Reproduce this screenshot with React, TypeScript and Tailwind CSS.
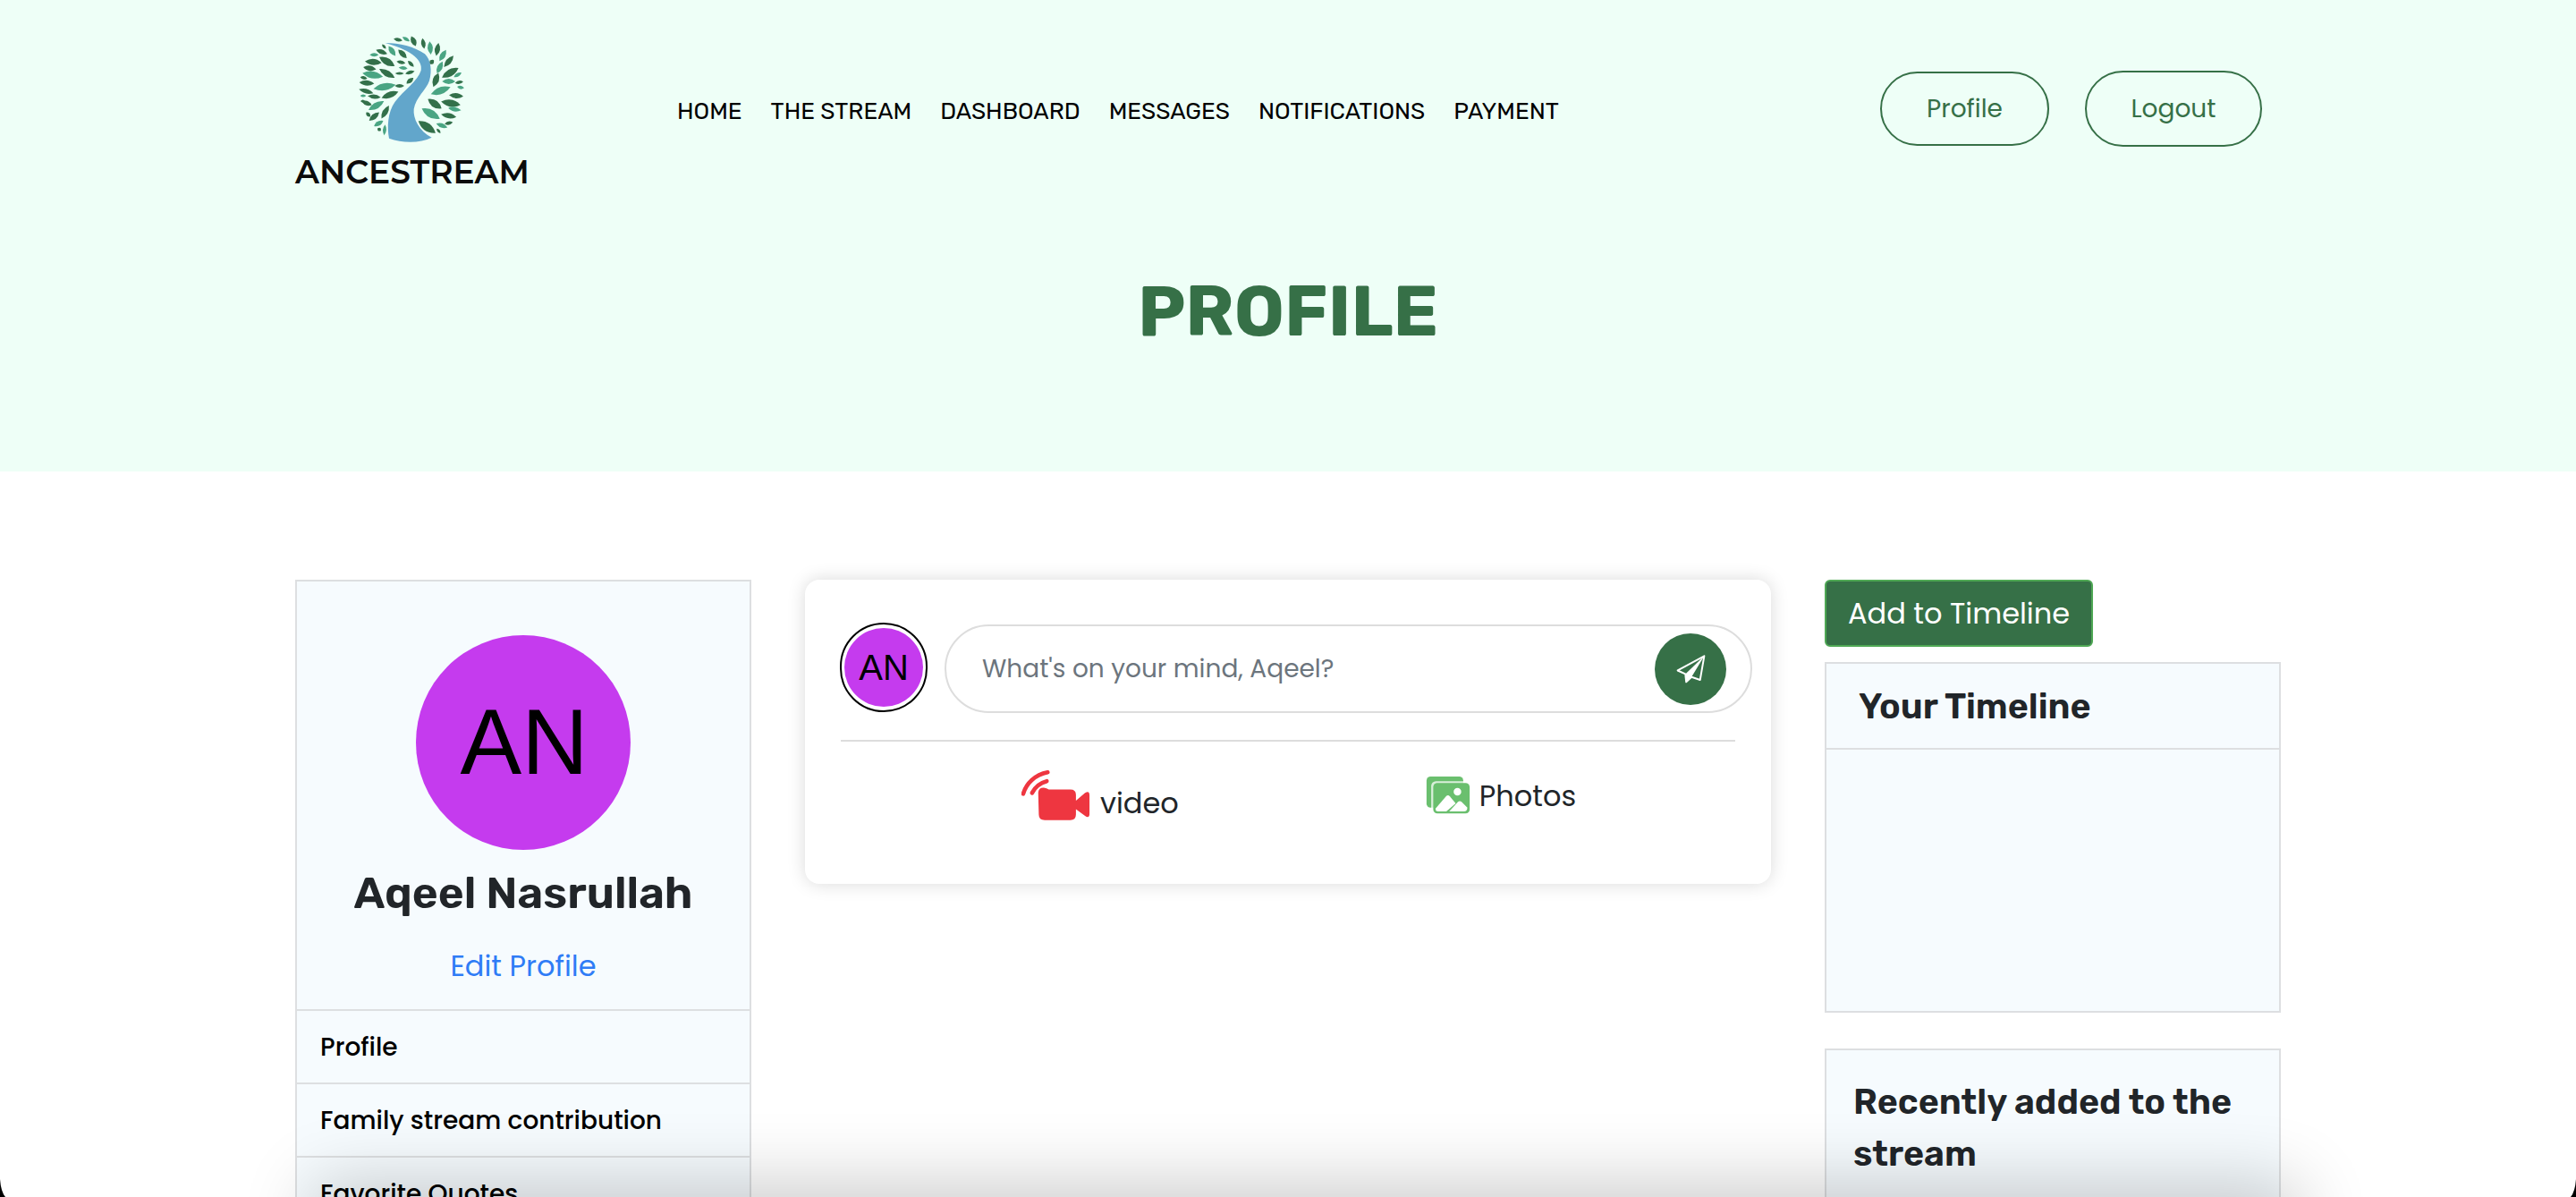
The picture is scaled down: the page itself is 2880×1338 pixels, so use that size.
const RUBIK = "font-['Rubik','Inter','Liberation_Sans',sans-serif]";
const POP = "font-['Poppins','Inter','Liberation_Sans',sans-serif]";
const D = "#33704a";
const L = "#4aa583";
const leaves: [number, number, number, number, number, string][] = [
  [195,37,15,4,10,D],[222,35,14,4,30,L],[247,42,18,6,65,D],[280,50,18,5,80,D],[303,65,22,6,85,L],[327,70,22,6,-80,D],
  [345,90,22,6,-60,L],[365,110,25,6,-50,D],[370,148,32,8,-30,D],[335,130,22,6,-65,L],[322,172,25,7,-70,D],[365,177,22,6,0,L],
  [400,180,14,4,-10,D],[395,155,15,4,-30,L],[338,208,35,8,-20,L],[390,225,24,6,5,D],[405,197,12,4,10,L],[372,250,33,8,10,D],
  [385,270,22,5,10,L],[365,292,26,6,10,D],[318,252,28,8,35,D],[305,285,35,9,30,L],[292,330,35,9,35,D],[342,325,20,5,20,L],
  [365,317,14,4,-10,D],[331,343,10,3,50,D],[308,112,8,6,45,D],[175,75,20,6,55,L],[140,78,20,5,20,D],[148,60,10,3,50,D],
  [115,88,15,4,0,L],[210,85,20,6,45,D],[158,110,30,8,30,D],[112,112,28,7,5,D],[100,133,22,6,10,D],[110,155,35,8,10,L],
  [158,150,30,7,30,D],[205,113,15,4,10,D],[238,118,14,4,45,D],[212,132,15,4,5,L],[200,150,15,3,0,D],[235,147,16,4,-15,D],
  [90,182,25,6,5,D],[150,195,38,8,-10,L],[200,192,16,4,0,D],[235,175,15,5,-40,D],[80,165,12,4,10,D],[88,210,25,5,15,D],
  [115,228,22,5,5,D],[168,222,30,7,-20,D],[78,225,10,3,0,L],[90,250,18,5,20,D],[122,258,30,7,-30,L],[77,243,8,3,0,D],
  [115,295,22,6,-40,D],[152,280,25,6,-60,D],[95,288,10,4,45,D],[130,318,18,5,-30,L],[132,338,7,4,40,D],[150,340,18,4,-85,L],
];

function Tree() {
  return (
    <svg width="160" height="140" viewBox="0 0 480 420">
      {leaves.map(([x, y, l, w, a, c], i) => (
        <path key={i} d={`M${-l} 0Q0 ${-w * 3} ${l} 0Q0 ${w * 3} ${-l} 0Z`} fill={c} transform={`translate(${x} ${y}) rotate(${a})`} />
      ))}
      <path d="M152 48C200 48 250 60 285 85C305 105 310 140 300 175C290 205 255 230 248 270C245 300 265 345 308 365C270 385 210 385 165 368C158 330 160 280 185 245C215 205 262 175 272 140C278 110 250 75 152 48Z" fill="#62a6cb" />
    </svg>
  );
}

function VideoIcon() {
  return (
    <svg width="78" height="56" viewBox="70 35 235 170" className="shrink-0">
      <path d="M75 115C85 80 115 50 158 42" fill="none" stroke="#ee3640" strokeWidth="14" strokeLinecap="round" />
      <path d="M105 112C115 92 132 78 155 72" fill="none" stroke="#ee3640" strokeWidth="14" strokeLinecap="round" />
      <path d="M126 110Q128 93 145 94Q155 96 162 100L235 100Q254 100 254 118L254 138L285 112Q300 102 300 120L300 182Q300 200 285 190L254 167L254 185Q254 204 235 204L148 204Q128 204 128 185Z" fill="#ee3640" />
    </svg>
  );
}

function PhotosIcon() {
  return (
    <svg width="50" height="43" viewBox="70 55 152 132" className="shrink-0">
      <rect x="72" y="58" width="126" height="107" rx="14" fill="#6abf6e" />
      <rect x="88" y="74" width="134" height="114" rx="16" fill="#ffffff" opacity="0.75" />
      <rect x="95" y="80" width="125" height="105" rx="14" fill="#6abf6e" />
      <circle cx="178" cy="110" r="13" fill="#fff" />
      <path d="M103 168L140 125Q146 120 152 126L172 150L140 178L112 178Q102 178 103 168Z" fill="#fff" />
      <path d="M150 178L180 145Q186 140 192 145L212 165Q212 178 200 178Z" fill="#fff" />
    </svg>
  );
}

function SendIcon() {
  return (
    <svg width="33" height="32" viewBox="160 125 100 97">
      <path d="M255 129L165 178L191 190L194 217L212 200L241 210Z" fill="none" stroke="#fff" strokeWidth="6" strokeLinejoin="round" />
      <path d="M255 129L191 190L194 217L212 200Z" fill="#fff" />
    </svg>
  );
}

const nav = ["HOME", "THE STREAM", "DASHBOARD", "MESSAGES", "NOTIFICATIONS", "PAYMENT"];

export default function App() {
  return (
    <div className="relative h-[1338px] overflow-hidden bg-white">
      <section className="h-[527px] bg-[#eefff7]">
        <div className="mx-auto w-[2220px] pt-[35px]">
          <div className="flex items-center">
            <div className="flex w-[260px] flex-col items-center">
              <div className="-mt-[3px] h-[140px]"><Tree /></div>
              <div className="ml-[2px] mt-[1px] whitespace-nowrap text-[36px] font-semibold leading-[38px] text-[#0b0b0b] font-['Montserrat','Inter',sans-serif]">ANCESTREAM</div>
            </div>
            <nav className={`ml-[167px] mt-[4px] flex items-center gap-[32px] text-[26px] leading-[30px] text-black ${RUBIK}`}>
              {nav.map((n) => <span key={n} className="whitespace-nowrap">{n}</span>)}
            </nav>
            <div className={`ml-auto mr-[21px] -mt-[3px] flex items-center gap-[40px] text-[28px] text-[#367047] ${POP}`}>
              <div className="flex h-[83px] w-[189px] items-center justify-center rounded-full border-2 border-[#367047]">Profile</div>
              <div className="flex h-[85px] w-[198px] items-center justify-center rounded-full border-2 border-[#367047]">Logout</div>
            </div>
          </div>
          <h1 className={`mt-[89px] text-center text-[79px] font-bold leading-[96px] text-[#367047] ${RUBIK}`}>PROFILE</h1>
        </div>
      </section>

      <main className="mx-auto mt-[121px] flex w-[2220px] items-start gap-[60px]">
        <aside className="w-[510px] shrink-0 border-2 border-[#dddfe1] bg-[#f6fbfe]">
          <div className="flex h-[478px] flex-col items-center pt-[60px]">
            <div className="flex h-[240px] w-[240px] items-center justify-center rounded-full bg-[#c53bee] pb-[2px] pl-[2px] font-['Liberation_Sans',sans-serif] text-[103px] leading-none text-black">AN</div>
            <div className={`mt-[19px] text-[49.5px] font-semibold leading-[58px] text-[#212529] ${RUBIK}`}>Aqeel Nasrullah</div>
            <div className={`mt-[33px] text-[32px] leading-[40px] text-[#2f7cf6] ${POP}`}>Edit Profile</div>
          </div>
          {["Profile", "Family stream contribution", "Favorite Quotes"].map((t) => (
            <div key={t} className={`flex h-[82px] items-center border-t-2 border-[#dddfe1] pl-[26px] pt-[2px] text-[28px] font-medium text-black ${POP}`}>{t}</div>
          ))}
        </aside>

        <section className="h-[340px] w-[1080px] shrink-0 rounded-2xl bg-white shadow-[0_0_20px_rgba(0,0,0,0.15)]">
          <div className="flex items-start gap-[19px] pl-[39px] pr-[21px] pt-[48px]">
            <div className="flex h-[100px] w-[98px] shrink-0 items-center justify-center rounded-full border-2 border-black bg-white">
              <div className="flex h-[88px] w-[88px] items-center justify-center rounded-full bg-[#c53bee] font-['Liberation_Sans',sans-serif] text-[40px] leading-none text-black">AN</div>
            </div>
            <div className="mt-[2px] flex h-[99px] flex-1 items-center justify-between rounded-full border-2 border-[#dddddd] pl-[40px] pr-[27px]">
              <span className={`text-[28px] text-[#6c757d] ${POP}`}>What's on your mind, Aqeel?</span>
              <span className="flex h-[80px] w-[80px] items-center justify-center rounded-full bg-[#367047]"><SendIcon /></span>
            </div>
          </div>
          <div className="mx-[40px] mt-[30px] h-[2px] bg-[#dddddd]" />
          <div className={`flex items-start pl-[242px] text-[32px] text-[#212529] ${POP}`}>
            <div className="mt-[31px] flex items-center gap-[10px]">
              <VideoIcon />
              <span className="leading-[40px] pt-[18px]">video</span>
            </div>
            <div className="ml-[276px] mt-[38px] flex items-center gap-[10px]">
              <PhotosIcon />
              <span className="leading-[40px] pt-[3px]">Photos</span>
            </div>
          </div>
        </section>

        <aside className="w-[510px] shrink-0">
          <button className={`flex h-[75px] w-[300px] items-center justify-center rounded-md border-2 border-[#4fa855] bg-[#367047] text-[32px] text-white ${POP}`}>Add to Timeline</button>
          <div className="mt-[17px] h-[392px] border-2 border-[#dddfe1] bg-[#f6fbfe]">
            <div className={`flex h-[96px] items-center border-b-2 border-[#dddfe1] pl-[36px] pt-[2px] text-[39.5px] font-semibold text-[#212529] ${RUBIK}`}>Your Timeline</div>
          </div>
          <div className="mt-[40px] h-[400px] border-2 border-[#dddfe1] bg-[#f6fbfe] px-[30px] pt-[29px]">
            <div className={`text-[39.5px] font-semibold leading-[58px] text-[#212529] ${RUBIK}`}>Recently added to the stream</div>
          </div>
        </aside>
      </main>

      <div className="pointer-events-none absolute left-[380px] right-[340px] top-[1352px] h-[40px] shadow-[0_0_80px_30px_rgba(0,0,0,0.2)]" />
      <svg className="absolute bottom-0 left-0" width="6" height="20" viewBox="0 0 6 20"><path d="M0 0Q1 14 6 20L0 20Z" fill="#000" /></svg>
      <svg className="absolute bottom-0 right-0" width="6" height="20" viewBox="0 0 6 20"><path d="M6 0Q5 14 0 20L6 20Z" fill="#000" /></svg>
    </div>
  );
}
